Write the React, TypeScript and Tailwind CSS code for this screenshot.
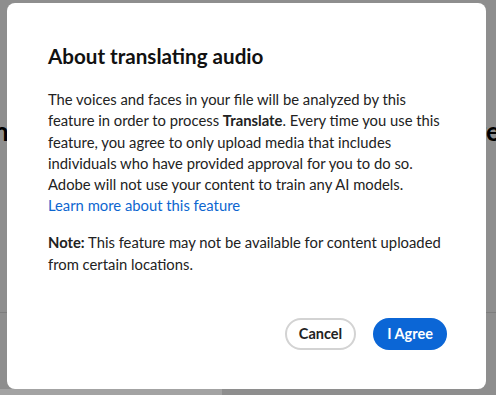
import React from "react";

const font = { fontFamily: "Lato, 'Open Sans', sans-serif" };

export default function App() {
  return (
    <div
      className="relative w-[496px] h-[395px] overflow-hidden bg-[#8e8e8e]"
      style={font}
    >
      {/* page behind the dialog, mostly hidden */}
      <div className="absolute left-0 top-[118px] w-full flex justify-between text-[26px] font-bold leading-none text-black">
        <span className="-ml-[6px]">n</span>
        <span className="-mr-[4px]">ge</span>
      </div>
      <div className="absolute left-0 top-[312px] w-full h-px bg-[#7d7d7d]" />
      <div className="absolute left-0 bottom-0 w-[222px] h-[6px] bg-[#a3a3a3]" />

      {/* dialog */}
      <section className="absolute left-[7px] top-[3px] w-[479px] h-[386px] rounded-lg bg-white flex flex-col pl-[41px] pr-[39px] pt-[40px] pb-[39px] text-[#222]">
        <h2 className="text-[20.6px] font-bold leading-[26px] text-[#111]">
          About translating audio
        </h2>
        <div className="mt-[20px] text-[14.8px] leading-[21.3px] whitespace-nowrap">
          <p>
            The voices and faces in your file will be analyzed by this
            <br />
            feature in order to process <b>Translate</b>. Every time you use this
            <br />
            feature, you agree to only upload media that includes
            <br />
            individuals who have provided approval for you to do so.
            <br />
            Adobe will not use your content to train any AI models.
          </p>
          <a href="#" className="block text-[#0d66d0]">
            Learn more about this feature
          </a>
          <p className="mt-[14px] leading-[22px]">
            <b>Note:</b> This feature may not be available for content uploaded
            <br />
            from certain locations.
          </p>
        </div>
        <div className="mt-auto flex justify-end gap-[17px]">
          <button className="h-[32px] w-[71px] rounded-full border-2 border-[#d3d3d3] text-[14.5px] font-bold text-[#222]">
            Cancel
          </button>
          <button className="h-[32px] w-[74px] rounded-full bg-[#0b66d6] text-[14.5px] font-bold text-white">
            I Agree
          </button>
        </div>
      </section>
    </div>
  );
}
